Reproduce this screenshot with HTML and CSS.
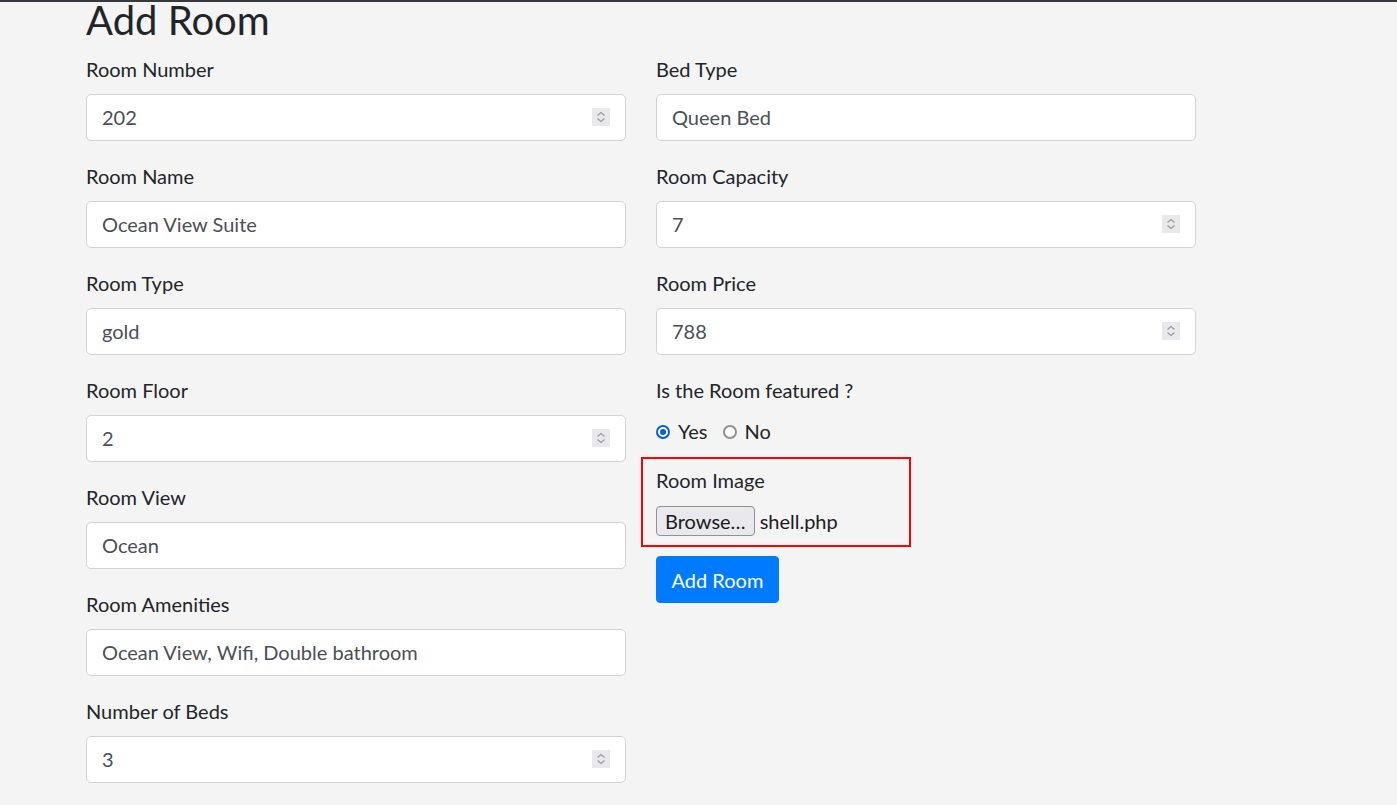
FILE: index.html
```html
<!DOCTYPE html>
<html lang="en">
<head>
<meta charset="utf-8">
<title>Add Room</title>
<link rel="stylesheet" href="styles.css">
</head>
<body>
<div class="topbar"></div>
<main class="container">
  <h1 class="title">Add Room</h1>
  <form class="form-grid">
    <div class="col">
      <div class="group">
        <label class="lbl">Room Number</label>
        <div class="field"><input class="ctl" type="text" value="202"><span class="spin"><svg width="18" height="18" viewBox="0 0 18 18"><path d="M5.5 7.5 L9 4.5 L12.5 7.5 M5.5 10.5 L9 13.5 L12.5 10.5" fill="none" stroke="#9a9aa6" stroke-width="1.3"/></svg></span></div>
      </div>
      <div class="group">
        <label class="lbl">Room Name</label>
        <div class="field"><input class="ctl" type="text" value="Ocean View Suite"></div>
      </div>
      <div class="group">
        <label class="lbl">Room Type</label>
        <div class="field"><input class="ctl" type="text" value="gold"></div>
      </div>
      <div class="group">
        <label class="lbl">Room Floor</label>
        <div class="field"><input class="ctl" type="text" value="2"><span class="spin"><svg width="18" height="18" viewBox="0 0 18 18"><path d="M5.5 7.5 L9 4.5 L12.5 7.5 M5.5 10.5 L9 13.5 L12.5 10.5" fill="none" stroke="#9a9aa6" stroke-width="1.3"/></svg></span></div>
      </div>
      <div class="group">
        <label class="lbl">Room View</label>
        <div class="field"><input class="ctl" type="text" value="Ocean"></div>
      </div>
      <div class="group">
        <label class="lbl">Room Amenities</label>
        <div class="field"><input class="ctl" type="text" value="Ocean View, Wifi, Double bathroom"></div>
      </div>
      <div class="group">
        <label class="lbl">Number of Beds</label>
        <div class="field"><input class="ctl" type="text" value="3"><span class="spin"><svg width="18" height="18" viewBox="0 0 18 18"><path d="M5.5 7.5 L9 4.5 L12.5 7.5 M5.5 10.5 L9 13.5 L12.5 10.5" fill="none" stroke="#9a9aa6" stroke-width="1.3"/></svg></span></div>
      </div>
    </div>
    <div class="col">
      <div class="group">
        <label class="lbl">Bed Type</label>
        <div class="field"><input class="ctl" type="text" value="Queen Bed"></div>
      </div>
      <div class="group">
        <label class="lbl">Room Capacity</label>
        <div class="field"><input class="ctl" type="text" value="7"><span class="spin"><svg width="18" height="18" viewBox="0 0 18 18"><path d="M5.5 7.5 L9 4.5 L12.5 7.5 M5.5 10.5 L9 13.5 L12.5 10.5" fill="none" stroke="#9a9aa6" stroke-width="1.3"/></svg></span></div>
      </div>
      <div class="group">
        <label class="lbl">Room Price</label>
        <div class="field"><input class="ctl" type="text" value="788"><span class="spin"><svg width="18" height="18" viewBox="0 0 18 18"><path d="M5.5 7.5 L9 4.5 L12.5 7.5 M5.5 10.5 L9 13.5 L12.5 10.5" fill="none" stroke="#9a9aa6" stroke-width="1.3"/></svg></span></div>
      </div>
      <div class="group-radio">
        <label class="lbl lbl-radio">Is the Room featured ?</label>
        <div class="radios">
          <span class="radio checked"></span><span class="rtext">Yes</span>
          <span class="radio"></span><span class="rtext">No</span>
        </div>
      </div>
      <div class="highlight">
        <label class="lbl lbl-file">Room Image</label>
        <div class="file-row"><span class="browse">Browse…</span><span class="fname">shell.php</span></div>
      </div>
      <div class="actions"><button type="button" class="btn">Add Room</button></div>
    </div>
  </form>
</main>
</body>
</html>
```
FILE: styles.css
```css
* { box-sizing: border-box; }
html, body {
  margin: 0;
  padding: 0;
  background: #f4f4f4;
  font-family: Lato, "Open Sans", "Liberation Sans", sans-serif;
  color: #212529;
  overflow: hidden;
}
.topbar {
  height: 2px;
  background: #343a40;
}
.container {
  padding-left: 86px;
}
.title {
  font-size: 40px;
  font-weight: 400;
  line-height: 48px;
  margin: -6px 0 10px;
  color: #212529;
}
.form-grid {
  display: flex;
  gap: 30px;
}
.col {
  width: 540px;
  display: flex;
  flex-direction: column;
}
.group {
  margin-bottom: 20px;
}
.lbl {
  display: block;
  font-size: 20px;
  line-height: 30px;
  margin-bottom: 10px;
}
.field {
  position: relative;
}
.ctl {
  display: block;
  width: 100%;
  height: 47px;
  padding: 0 15px 2px;
  font-family: inherit;
  font-size: 20px;
  color: #495057;
  background: #fff;
  border: 1px solid #ced4da;
  border-radius: 5px;
  outline: none;
}
.spin {
  position: absolute;
  right: 16px;
  top: 14px;
  width: 18px;
  height: 18px;
  background: #e9e9ed;
  display: block;
}
.spin svg { display: block; }
.lbl-radio {
  margin-bottom: 0;
}
.radios {
  display: flex;
  align-items: center;
  height: 27px;
  margin-top: 13px;
  font-size: 20px;
}
.radio {
  width: 14px;
  height: 14px;
  border-radius: 50%;
  border: 2px solid #8f8f9d;
  background: #fff;
  margin-right: 8px;
  position: relative;
}
.radio.checked {
  border-color: #0060df;
}
.radio.checked::after {
  content: "";
  position: absolute;
  left: 2px;
  top: 2px;
  width: 6px;
  height: 6px;
  border-radius: 50%;
  background: #0060df;
}
.rtext {
  margin-right: 15px;
  line-height: 27px;
}
.highlight {
  width: 270px;
  height: 90px;
  margin: 12px 0 0 -15px;
  border: 2px solid #ff0000;
  padding: 6px 13px 0;
}
.lbl-file {
  margin-bottom: 11px;
}
.file-row {
  display: flex;
  align-items: center;
  height: 30px;
  font-size: 20px;
}
.browse {
  height: 30px;
  line-height: 28px;
  padding: 0 8px;
  background: #e9e9ed;
  border: 1px solid #8f8f9d;
  border-radius: 4px;
  color: #1b1b1b;
  margin-right: 5px;
}
.fname {
  color: #1b1b1b;
}
.actions {
  margin-top: 9px;
}
.btn {
  font-family: inherit;
  font-size: 20px;
  line-height: 30px;
  padding: 0 14.5px;
  height: 47px;
  color: #fff;
  background: #007bff;
  border: 1px solid #007bff;
  border-radius: 4px;
}
```
